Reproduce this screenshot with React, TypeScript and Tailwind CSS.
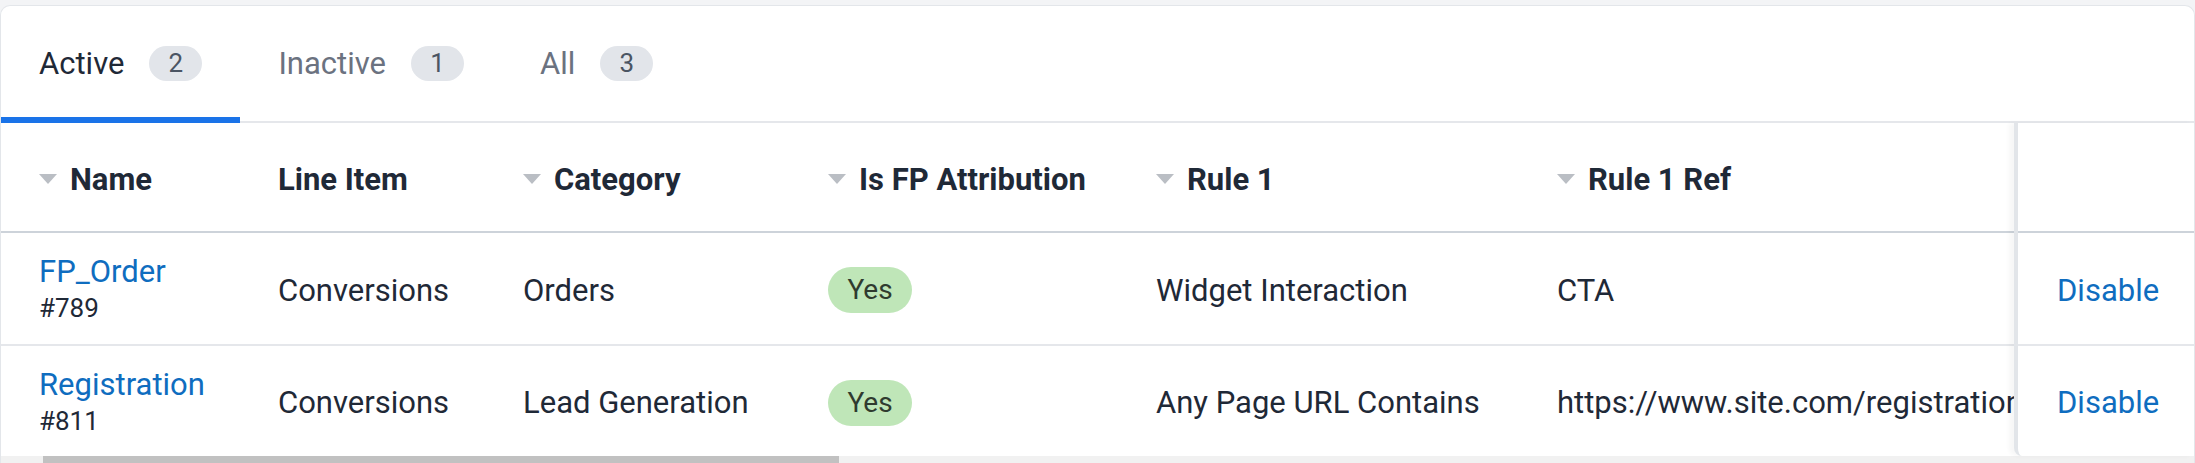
import React from "react";

function SortCaret() {
  return (
    <svg width="18" height="10" viewBox="0 0 18 10" className="shrink-0">
      <polygon points="0,0 18,0 9,10" fill="#babec4" />
    </svg>
  );
}

function Tab({ label, count, active }: { label: string; count: number; active?: boolean }) {
  return (
    <div
      className={
        "flex items-center self-stretch -mb-[2px] border-b-[6px] px-[38px] pt-[3px] " +
        (active ? "border-[#1a73e8] text-[#1f2937]" : "border-transparent text-[#6b7280]")
      }
    >
      <span className="text-[31px] leading-none">{label}</span>
      <span className="ml-[25px] flex h-[35px] w-[53px] items-center justify-center rounded-full bg-[#e2e5ea] text-[26px] leading-none text-[#4b5563]">
        {count}
      </span>
    </div>
  );
}

function HeadCell({ w, label, sort }: { w: string; label: string; sort?: boolean }) {
  return (
    <div className={"flex shrink-0 items-center pl-[38px] pt-[4px] " + w}>
      {sort && (
        <span className="mr-[13px] flex">
          <SortCaret />
        </span>
      )}
      <span className="whitespace-nowrap text-[31px] font-bold leading-none text-[#1f2937]">{label}</span>
    </div>
  );
}

function Cell({ w, children }: { w: string; children: React.ReactNode }) {
  return <div className={"flex shrink-0 items-center whitespace-nowrap pl-[38px] pt-[3px] " + w}>{children}</div>;
}

const cols = ["w-[239px]", "w-[245px]", "w-[305px]", "w-[328px]", "w-[401px]", "w-[640px]"];

const rows = [
  {
    name: "FP_Order",
    id: "#789",
    line: "Conversions",
    category: "Orders",
    rule: "Widget Interaction",
    ref: "CTA",
  },
  {
    name: "Registration",
    id: "#811",
    line: "Conversions",
    category: "Lead Generation",
    rule: "Any Page URL Contains",
    ref: "https://www.site.com/registration",
  },
];

export default function App() {
  return (
    <div className="h-[463px] w-[2195px] overflow-hidden bg-[#f3f4f6] pt-[5px] font-['Roboto',sans-serif]">
      <div className="flex h-[458px] flex-col overflow-hidden rounded-t-[10px] border-x border-t border-[#e3e6ea] bg-white">
        {/* Tabs */}
        <div className="flex h-[117px] shrink-0 border-b-2 border-[#e5e7eb]">
          <Tab label="Active" count={2} active />
          <Tab label="Inactive" count={1} />
          <Tab label="All" count={3} />
        </div>

        {/* Table */}
        <div className="flex h-[333px] shrink-0">
          <div className="w-[2013px] shrink-0 overflow-hidden">
            <div className="flex h-[110px] border-b-2 border-[#cdd3da]">
              <HeadCell w={cols[0]} label="Name" sort />
              <HeadCell w={cols[1]} label="Line Item" />
              <HeadCell w={cols[2]} label="Category" sort />
              <HeadCell w={cols[3]} label="Is FP Attribution" sort />
              <HeadCell w={cols[4]} label="Rule 1" sort />
              <HeadCell w={cols[5]} label="Rule 1 Ref" sort />
            </div>
            {rows.map((r, i) => (
              <div
                key={r.name}
                className={
                  "flex text-[31px] leading-none text-[#1f2937] " +
                  (i === 0 ? "h-[113px] border-b-2 border-[#e5e7eb]" : "h-[110px]")
                }
              >
                <Cell w={cols[0]}>
                  <div className="flex flex-col">
                    <span className="h-[36px] leading-[36px] text-[#0f6dbf]">{r.name}</span>
                    <span className="h-[36px] text-[26px] leading-[36px] text-[#1f2937]">{r.id}</span>
                  </div>
                </Cell>
                <Cell w={cols[1]}>{r.line}</Cell>
                <Cell w={cols[2]}>{r.category}</Cell>
                <Cell w={cols[3]}>
                  <span className="flex h-[46px] w-[84px] items-center justify-center rounded-full bg-[#bfe6b8] text-[28px] leading-none text-[#2f3b2f]">
                    Yes
                  </span>
                </Cell>
                <Cell w={cols[4]}>{r.rule}</Cell>
                <Cell w={cols[5]}>{r.ref}</Cell>
              </div>
            ))}
          </div>

          {/* Sticky action column */}
          <div className="relative z-10 flex flex-1 flex-col rounded-bl-[8px] border-l-4 border-[#e2e5e9] bg-white shadow-[-5px_0_4px_rgba(0,0,0,0.035)]">
            <div className="h-[110px] border-b-2 border-[#cdd3da]" />
            <div className="flex h-[113px] items-center border-b-2 border-[#e5e7eb] pl-[39px] pt-[3px] text-[31px] leading-none text-[#0f6dbf]">
              Disable
            </div>
            <div className="flex h-[110px] items-center pl-[39px] pt-[3px] text-[31px] leading-none text-[#0f6dbf]">
              Disable
            </div>
          </div>
        </div>

        {/* Horizontal scrollbar */}
        <div className="h-[8px] shrink-0 bg-[#f1f1f1]">
          <div className="ml-[42px] h-full w-[796px] bg-[#c1c1c1]" />
        </div>
      </div>
    </div>
  );
}
